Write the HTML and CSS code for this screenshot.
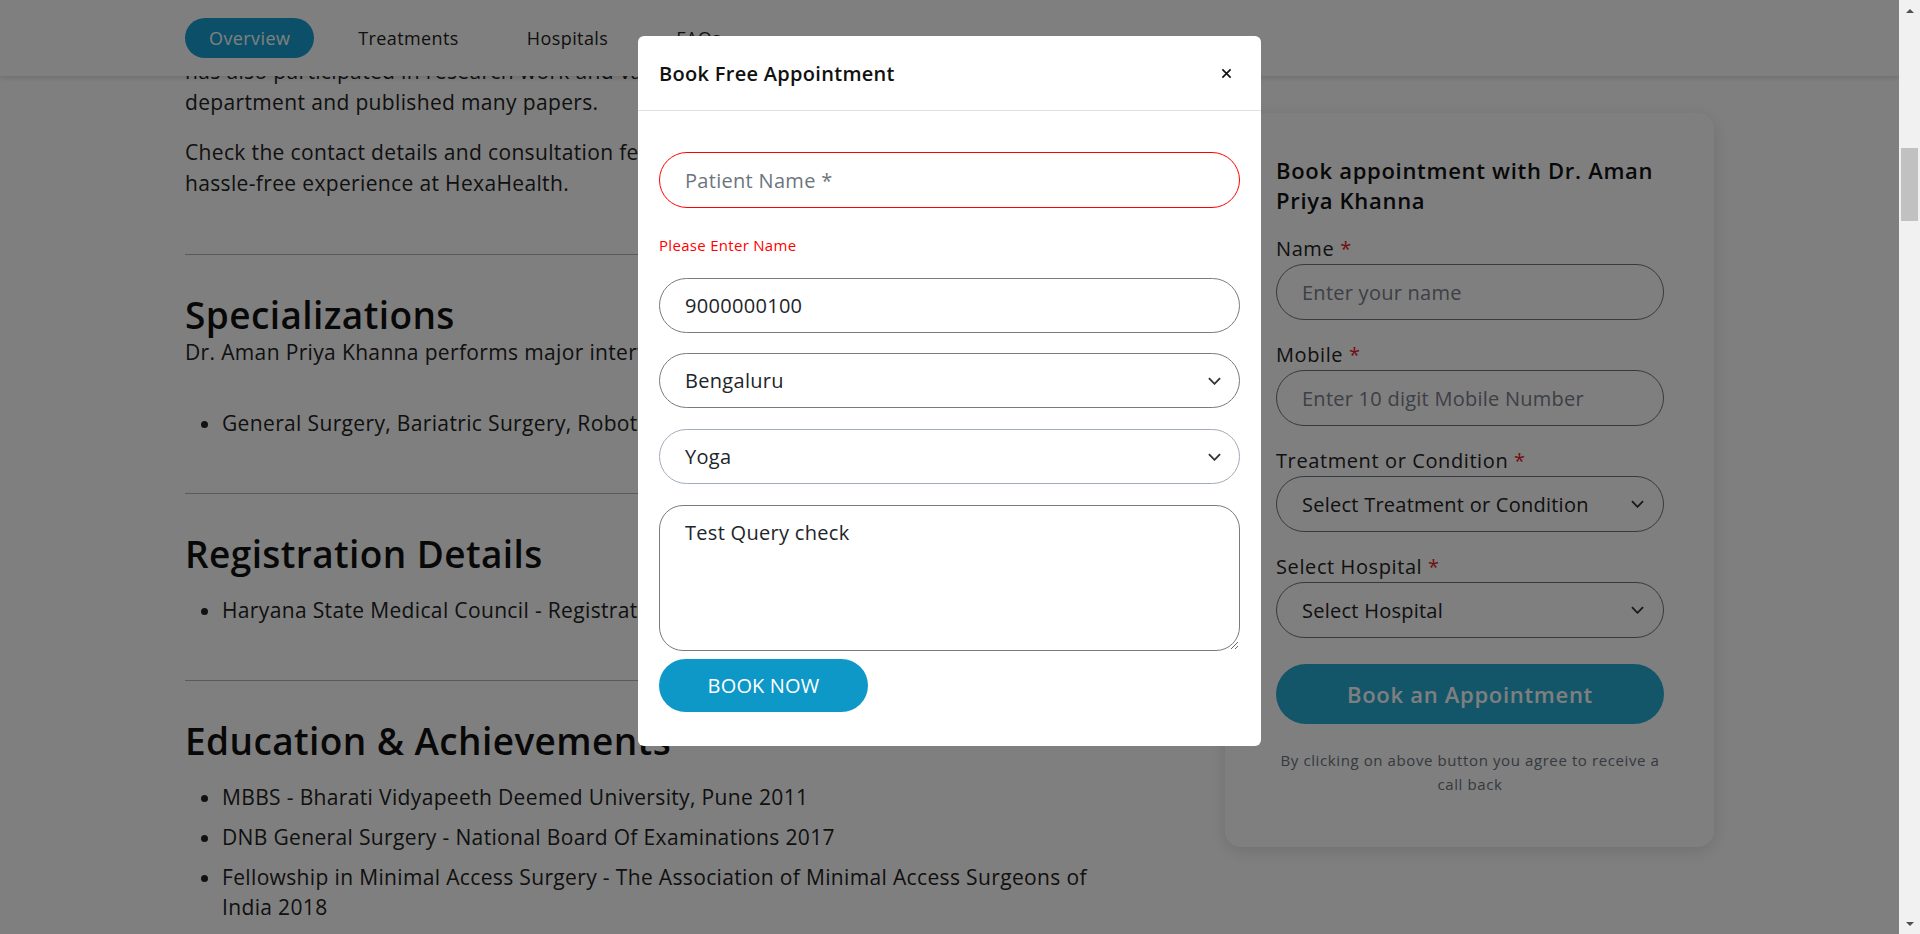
FILE: index.html
```html
<!DOCTYPE html>
<html lang="en">
<head>
<meta charset="utf-8">
<title>Dr. Aman Priya Khanna - HexaHealth</title>
<link rel="stylesheet" href="styles.css">
</head>
<body>
<div class="screen">
  <div class="viewport">
    <header class="topnav">
      <nav class="container nav-inner">
        <a class="nav-item is-active" href="#">Overview</a>
        <a class="nav-item" href="#">Treatments</a>
        <a class="nav-item" href="#">Hospitals</a>
        <a class="nav-item" href="#">FAQs</a>
      </nav>
    </header>

    <main class="container layout">
      <article class="content">
        <p class="text">has also participated in research work and various academic activities of the<br>department and published many papers.</p>
        <p class="text">Check the contact details and consultation fees of the doctor and book now for a<br>hassle-free experience at HexaHealth.</p>

        <hr class="divider">
        <section class="section">
          <h2 class="section-title">Specializations</h2>
          <p class="text lead">Dr. Aman Priya Khanna performs major interventions in the following areas:</p>
          <ul class="list">
            <li>General Surgery, Bariatric Surgery, Robotic Surgery, Laparoscopic Surgery</li>
          </ul>
        </section>

        <hr class="divider">
        <section class="section">
          <h2 class="section-title">Registration Details</h2>
          <ul class="list">
            <li>Haryana State Medical Council - Registration No. HN 14987</li>
          </ul>
        </section>

        <hr class="divider">
        <section class="section">
          <h2 class="section-title">Education &amp; Achievements</h2>
          <ul class="list">
            <li>MBBS - Bharati Vidyapeeth Deemed University, Pune 2011</li>
            <li>DNB General Surgery - National Board Of Examinations 2017</li>
            <li>Fellowship in Minimal Access Surgery - The Association of Minimal Access Surgeons of<br>India 2018</li>
          </ul>
        </section>
      </article>

      <aside class="booking-card">
        <h3 class="card-title">Book appointment with Dr. Aman<br>Priya Khanna</h3>
        <div class="field">
          <label class="field-label">Name <span class="req">*</span></label>
          <input class="pill-input" type="text" placeholder="Enter your name">
        </div>
        <div class="field">
          <label class="field-label">Mobile <span class="req">*</span></label>
          <input class="pill-input" type="text" placeholder="Enter 10 digit Mobile Number">
        </div>
        <div class="field">
          <label class="field-label">Treatment or Condition <span class="req">*</span></label>
          <div class="pill-select">
            <span>Select Treatment or Condition</span>
            <svg class="chev" viewBox="0 0 14 8" width="13" height="8"><path d="M1 1l6 6 6-6"/></svg>
          </div>
        </div>
        <div class="field">
          <label class="field-label">Select Hospital <span class="req">*</span></label>
          <div class="pill-select">
            <span>Select Hospital</span>
            <svg class="chev" viewBox="0 0 14 8" width="13" height="8"><path d="M1 1l6 6 6-6"/></svg>
          </div>
        </div>
        <button class="cta" type="button">Book an Appointment</button>
        <p class="consent">By clicking on above button you agree to receive a<br>call back</p>
      </aside>
    </main>

    <div class="overlay">
      <div class="modal" role="dialog">
        <div class="modal-header">
          <h2 class="modal-title">Book Free Appointment</h2>
          <button class="modal-close" type="button" aria-label="Close">
            <svg viewBox="0 0 12 12" width="11" height="11"><path d="M1.5 1.5l9 9M10.5 1.5l-9 9"/></svg>
          </button>
        </div>
        <form class="modal-body">
          <input class="m-input is-invalid" type="text" placeholder="Patient Name *">
          <div class="m-error">Please Enter Name</div>
          <input class="m-input" type="text" value="9000000100">
          <div class="m-select">
            <span>Bengaluru</span>
            <svg class="chev" viewBox="0 0 14 8" width="13" height="8"><path d="M1 1l6 6 6-6"/></svg>
          </div>
          <div class="m-select soft">
            <span>Yoga</span>
            <svg class="chev" viewBox="0 0 14 8" width="13" height="8"><path d="M1 1l6 6 6-6"/></svg>
          </div>
          <textarea class="m-textarea">Test Query check</textarea>
          <button class="m-submit" type="button">BOOK NOW</button>
        </form>
      </div>
    </div>
  </div>

  <div class="scrollbar">
    <div class="sb-arrow"><span class="tri up"></span></div>
    <div class="sb-track"><div class="sb-thumb"></div></div>
    <div class="sb-arrow"><span class="tri down"></span></div>
  </div>
</div>
</body>
</html>
```

FILE: styles.css
```css
:root {
  --font: "Open Sans", "Noto Sans", "DejaVu Sans", sans-serif;
  --ink: #1f1f1f;
}

* { box-sizing: border-box; }

html, body {
  margin: 0;
  height: 100%;
  overflow: hidden;
}

body {
  font-family: var(--font);
  color: var(--ink);
  background: #fff;
}

.screen {
  display: flex;
  width: 1920px;
  height: 934px;
}

.viewport {
  position: relative;
  flex: 1;
  overflow: hidden;
  background: #fff;
}

.container {
  width: 1529px;
  margin: 0 auto;
}

/* ---------- top nav ---------- */
.topnav {
  position: absolute;
  top: 0;
  left: 0;
  right: 0;
  height: 76px;
  background: #fff;
  box-shadow: 0 2px 5px rgba(0, 0, 0, 0.14);
  z-index: 2;
}

.nav-inner {
  display: flex;
  align-items: center;
  gap: 20px;
  height: 100%;
}

.nav-item {
  display: flex;
  align-items: center;
  height: 40px;
  padding: 0 24px;
  border-radius: 20px;
  font-size: 18px;
  color: #222;
  text-decoration: none;
  letter-spacing: 0.4px;
}

.nav-item.is-active {
  background: #16a0d0;
  color: #fff;
}

/* ---------- page layout ---------- */
.layout {
  display: grid;
  grid-template-columns: 945px 489px;
  column-gap: 95px;
  align-items: start;
  padding-top: 56px;
}

.text {
  margin: 0 0 19px;
  font-size: 21px;
  line-height: 31px;
  letter-spacing: 0.35px;
  color: #222;
  white-space: nowrap;
}

.text.lead { margin-bottom: 40px; }

.divider {
  border: 0;
  border-top: 1px solid #b4b4b4;
  margin: 55px 0 41px;
}

.section-title {
  margin: 0 0 3px;
  font-size: 37px;
  line-height: 38px;
  font-weight: 600;
  color: #111;
  letter-spacing: 0.4px;
}

.list {
  margin: 22px 0 0;
  padding-left: 37px;
}

.list li {
  font-size: 21px;
  line-height: 30px;
  margin-bottom: 10px;
  letter-spacing: 0.35px;
  color: #222;
}

/* ---------- booking card ---------- */
.booking-card {
  margin-top: 57px;
  padding: 42px 50px 51px 51px;
  background: #fff;
  border-radius: 16px;
  box-shadow: 0 4px 18px rgba(0, 0, 0, 0.13);
}

.card-title {
  margin: 0 0 20px;
  font-size: 22px;
  line-height: 30px;
  font-weight: 600;
  color: #111;
  letter-spacing: 0.7px;
}

.field { margin-bottom: 21px; }

.field-label {
  display: block;
  margin-bottom: 2px;
  font-size: 20px;
  line-height: 27px;
  color: #222;
  letter-spacing: 0.6px;
}

.req { color: #e01b1b; }

.pill-input,
.pill-select {
  display: flex;
  align-items: center;
  justify-content: space-between;
  width: 100%;
  height: 56px;
  padding: 0 19px 0 25px;
  border: 1px solid #6b7280;
  border-radius: 28px;
  background: #fff;
  font-family: var(--font);
  font-size: 20px;
  color: #222;
  letter-spacing: 0.25px;
  outline: none;
}

.pill-input::placeholder { color: #7a808a; }

.chev {
  flex: none;
  fill: none;
  stroke: #333;
  stroke-width: 2;
}

.cta {
  display: block;
  width: 100%;
  height: 60px;
  margin-top: 26px;
  border: 0;
  border-radius: 30px;
  background: #26acd4;
  color: #fff;
  font-family: var(--font);
  font-size: 22px;
  font-weight: 600;
  letter-spacing: 0.7px;
}

.consent {
  margin: 24px 0 0;
  font-size: 15px;
  line-height: 24px;
  text-align: center;
  color: #6b7280;
  letter-spacing: 0.6px;
}

/* ---------- modal ---------- */
.overlay {
  position: absolute;
  inset: 0;
  z-index: 10;
  display: flex;
  justify-content: center;
  align-items: flex-start;
  padding-top: 36px;
  background: rgba(0, 0, 0, 0.5);
}

.modal {
  width: 623px;
  background: #fff;
  border-radius: 6px;
  color: #212529;
}

.modal-header {
  display: flex;
  align-items: center;
  justify-content: space-between;
  height: 75px;
  padding: 0 29px 0 21px;
  border-bottom: 1px solid #dee2e6;
}

.modal-title {
  margin: 0;
  font-size: 20px;
  font-weight: 600;
  color: #111;
  letter-spacing: 0.3px;
}

.modal-close {
  display: flex;
  padding: 0;
  border: 0;
  background: none;
}

.modal-close svg {
  fill: none;
  stroke: #111;
  stroke-width: 1.8;
}

.modal-body {
  display: flex;
  flex-direction: column;
  padding: 41px 21px 34px;
}

.m-input,
.m-select {
  display: flex;
  align-items: center;
  justify-content: space-between;
  width: 100%;
  height: 55px;
  padding: 0 18px 0 25px;
  border: 1px solid #7b7b7b;
  border-radius: 28px;
  background: #fff;
  font-family: var(--font);
  font-size: 20px;
  color: #212529;
  letter-spacing: 0.3px;
  outline: none;
}

.m-input.is-invalid {
  height: 56px;
  border-color: #ff0000;
}

.m-input::placeholder { color: #6c757d; }

.m-error {
  margin: 27px 0 23px;
  font-size: 15px;
  line-height: 20px;
  color: #ff0000;
  letter-spacing: 0.3px;
}

.m-select { margin-top: 20px; }
.m-select.soft {
  margin-top: 21px;
  border-color: #a3acb8;
}

.m-textarea {
  display: block;
  width: 100%;
  height: 146px;
  margin-top: 21px;
  padding: 13px 25px;
  border: 1px solid #7b7b7b;
  border-radius: 24px;
  font-family: var(--font);
  font-size: 20px;
  line-height: 27px;
  color: #212529;
  letter-spacing: 0.3px;
  resize: vertical;
  outline: none;
}

.m-submit {
  align-self: flex-start;
  width: 209px;
  height: 53px;
  margin-top: 8px;
  border: 0;
  border-radius: 27px;
  background: #0e98c7;
  color: #fff;
  font-family: var(--font);
  font-size: 20px;
  font-weight: 500;
  letter-spacing: 0.15px;
}

/* ---------- scrollbar ---------- */
.scrollbar {
  display: flex;
  flex-direction: column;
  width: 21px;
  background: #f1f1f1;
}

.sb-arrow {
  display: flex;
  align-items: center;
  justify-content: center;
  height: 21px;
  flex: none;
}

.tri {
  width: 0;
  height: 0;
  border-left: 4px solid transparent;
  border-right: 4px solid transparent;
}

.tri.up { border-bottom: 4px solid #505050; }
.tri.down { border-top: 4px solid #505050; }

.sb-track { flex: 1; }

.sb-thumb {
  height: 73px;
  margin: 127px 2px 0;
  background: #c1c1c1;
}
```
